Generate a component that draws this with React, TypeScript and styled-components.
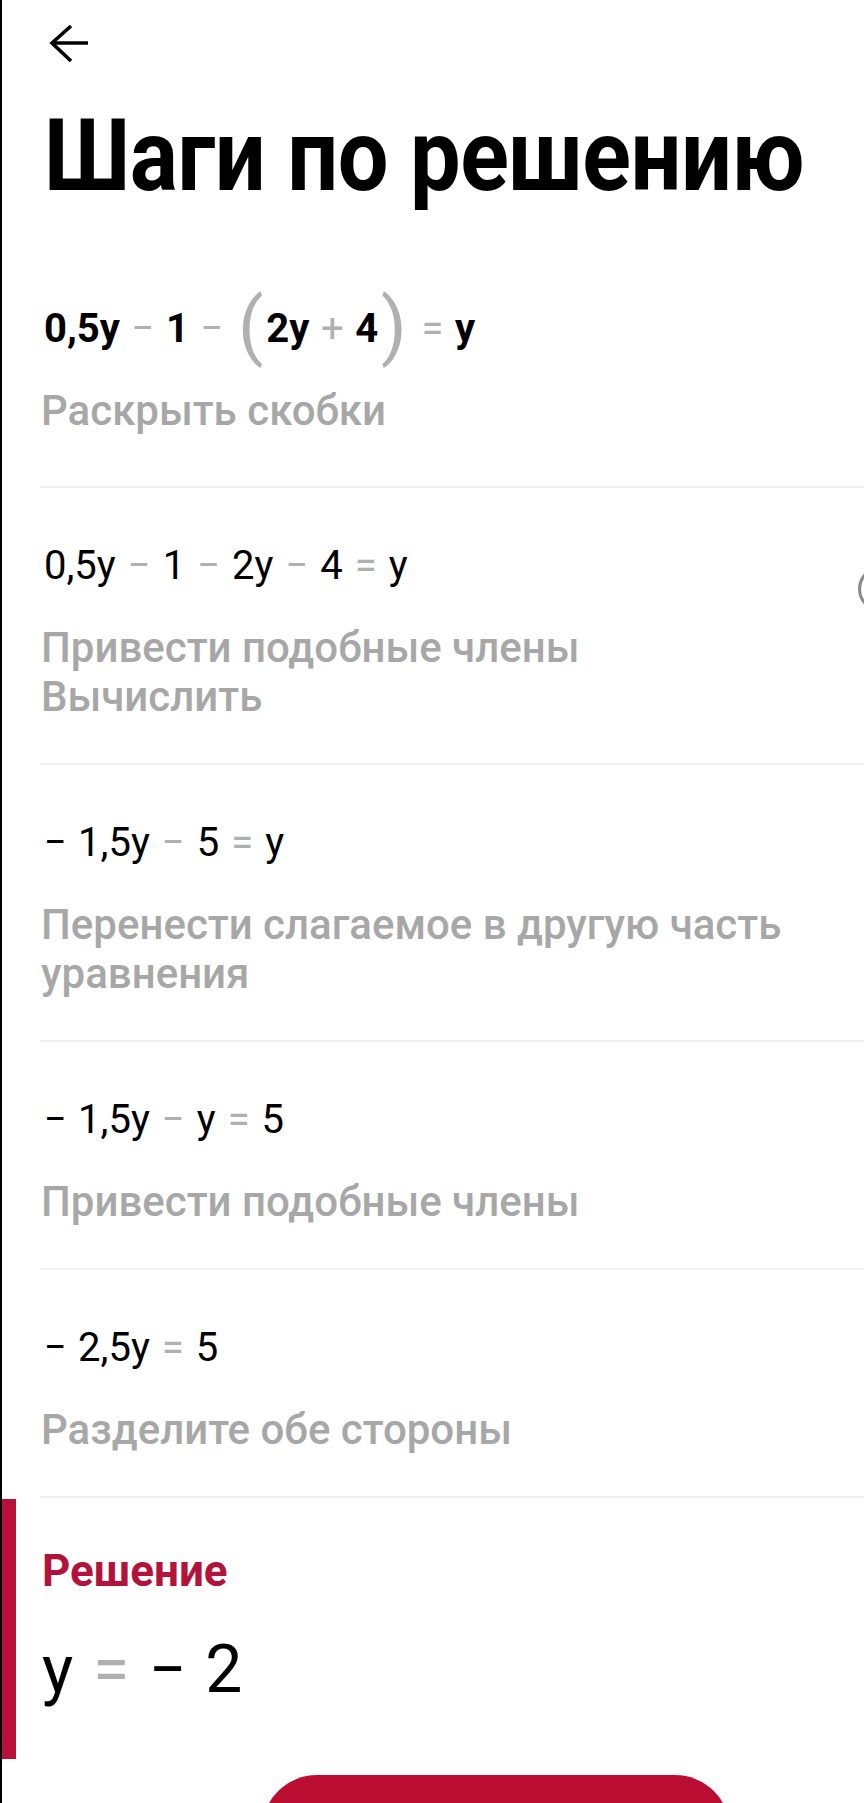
import React, { FC } from 'react';
import styled, { createGlobalStyle } from 'styled-components';

type Kind = 'num' | 'op' | 'paren' | 'sign';
type Token = { t: string; k: Kind };

type StepData = {
    eq: Token[];
    labels: string[];
    bold?: boolean;
};

const n = (t: string): Token => ({ t, k: 'num' });
const o = (t: string): Token => ({ t, k: 'op' });
const p = (t: string): Token => ({ t, k: 'paren' });
const s = (t: string): Token => ({ t, k: 'sign' });

const steps: StepData[] = [
    {
        bold: true,
        eq: [n('0,5y'), o('−'), n('1'), o('−'), p('('), n('2y'), o('+'), n('4'), p(')'), o('='), n('y')],
        labels: ['Раскрыть скобки'],
    },
    {
        eq: [n('0,5y'), o('−'), n('1'), o('−'), n('2y'), o('−'), n('4'), o('='), n('y')],
        labels: ['Привести подобные члены', 'Вычислить'],
    },
    {
        eq: [s('−'), n('1,5y'), o('−'), n('5'), o('='), n('y')],
        labels: ['Перенести слагаемое в другую часть', 'уравнения'],
    },
    {
        eq: [s('−'), n('1,5y'), o('−'), n('y'), o('='), n('5')],
        labels: ['Привести подобные члены'],
    },
    {
        eq: [s('−'), n('2,5y'), o('='), n('5')],
        labels: ['Разделите обе стороны'],
    },
];

const Equation: FC<{ tokens: Token[]; bold?: boolean; big?: boolean }> = ({ tokens, bold, big }) => (
    <EqLine $bold={bold} $big={big}>
        {tokens.map((tk, i) => {
            if (tk.k === 'paren') return <Paren key={i}>{tk.t}</Paren>;
            if (tk.k === 'op') return <Op key={i} $tight={bold}>{tk.t}</Op>;
            if (tk.k === 'sign') return <Sign key={i}>{tk.t}</Sign>;
            return <Term key={i}>{tk.t}</Term>;
        })}
    </EqLine>
);

const App: FC = () => {
    return (
        <>
            <GlobalStyle />
            <Page>
                <TopBar>
                    <BackButton aria-label="Назад">
                        <svg width="42" height="40" viewBox="0 0 42 40" fill="none">
                            <path d="M4 19 H40" stroke="#000" strokeWidth="3.6" />
                            <path d="M23 2 L4 19 L23 37" stroke="#000" strokeWidth="3.6" strokeLinejoin="miter" />
                        </svg>
                    </BackButton>
                </TopBar>

                <Title>Шаги по решению</Title>

                <StepList>
                    {steps.map((st, i) => (
                        <Step key={i} $bold={st.bold}>
                            <Equation tokens={st.eq} bold={st.bold} />
                            <Labels>
                                {st.labels.map((l) => (
                                    <Label key={l}>{l}</Label>
                                ))}
                            </Labels>
                        </Step>
                    ))}
                </StepList>

                <Solution>
                    <SolutionTitle>Решение</SolutionTitle>
                    <Equation big tokens={[n('y'), o('='), s('−'), n('2')]} />
                </Solution>

                <ButtonRow>
                    <RedButton />
                </ButtonRow>

                <EdgeHandle />
            </Page>
        </>
    );
};

export default App;

const GlobalStyle = createGlobalStyle`
    html, body {
        margin: 0;
        padding: 0;
        background: #ffffff;
    }
    body {
        font-family: Roboto, "Noto Sans", "Liberation Sans", sans-serif;
        color: #000;
    }
`;

const Page = styled.div`
    position: relative;
    width: 864px;
    height: 1803px;
    box-sizing: border-box;
    border-left: 2px solid #000;
    overflow: hidden;
    background: #fff;
`;

const TopBar = styled.div`
    height: 68px;
    padding-top: 24px;
    padding-left: 46px;
    box-sizing: border-box;
    display: flex;
    align-items: flex-start;
`;

const BackButton = styled.div`
    width: 42px;
    height: 40px;
    display: flex;
`;

const Title = styled.h1`
    margin: 30px 0 0 42px;
    font-size: 100px;
    line-height: 116px;
    font-weight: 700;
    letter-spacing: -0.5px;
    white-space: nowrap;
    transform: scaleX(0.9);
    transform-origin: left center;
`;

const StepList = styled.div`
    margin-top: 37px;
`;

const Step = styled.div<{ $bold?: boolean }>`
    margin-left: 38px;
    padding: 53px 0 ${(p) => (p.$bold ? '51px' : '42px')} 4px;
    border-bottom: 2px solid #f1f1f1;
`;

const EqLine = styled.div<{ $bold?: boolean; $big?: boolean }>`
    display: flex;
    align-items: center;
    height: ${(p) => (p.$big ? '72px' : '48px')};
    font-size: ${(p) => (p.$big ? '66px' : '40px')};
    font-weight: ${(p) => (p.$bold ? 700 : 400)};
    color: #000;
`;

const Term = styled.span`
    white-space: pre;
`;

const Sign = styled.span`
    margin-right: 0.28em;
`;

const Op = styled.span<{ $tight?: boolean }>`
    color: #b0b0b0;
    margin: 0 ${(p) => (p.$tight ? '0.29em' : '0.3em')};
    font-weight: 400;
`;

const Paren = styled.span`
    color: #b0b0b0;
    font-weight: 400;
    font-size: 1.85em;
    margin: 0 0.04em;
    position: relative;
    top: -0.04em;
`;

const Labels = styled.div`
    margin-top: 34px;
    margin-left: -3px;
`;

const Label = styled.div`
    font-size: 42px;
    line-height: 49px;
    font-weight: 500;
    color: #a7a7a7;
`;

const Solution = styled.div`
    margin-top: 1px;
    height: 260px;
    box-sizing: border-box;
    border-left: 14px solid #b8103a;
    padding: 48px 0 0 26px;
`;

const SolutionTitle = styled.div`
    font-size: 44px;
    line-height: 48px;
    font-weight: 700;
    color: #b3123b;
    margin-bottom: 38px;
`;

const ButtonRow = styled.div`
    padding: 16px 0 0 260px;
`;

const RedButton = styled.div`
    width: 468px;
    height: 110px;
    border-radius: 55px;
    background: #bc0e33;
`;

const EdgeHandle = styled.div`
    position: absolute;
    right: -40px;
    top: 566px;
    width: 46px;
    height: 46px;
    border-radius: 50%;
    border: 3px solid #8a8a8a;
    box-sizing: border-box;
`;
